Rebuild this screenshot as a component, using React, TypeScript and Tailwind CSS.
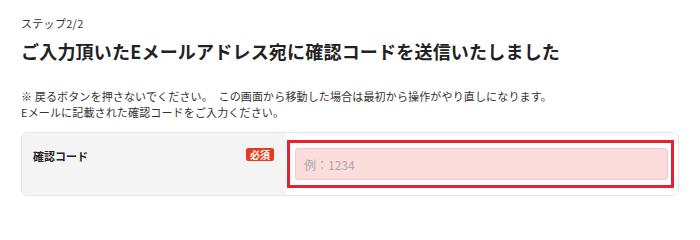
import React from 'react';

const App: React.FC = () => {
  return (
    <div
      className="w-[700px] h-[210px] bg-white px-[21px] pt-[15px] text-[#333]"
      style={{ fontFamily: '"Noto Sans CJK JP", "Noto Sans", sans-serif' }}
    >
      <p className="text-[11px] leading-[16px] tracking-[0.3px] text-[#333]">ステップ2/2</p>
      <h1 className="mt-[7px] text-[18px] leading-[26px] font-bold tracking-[0.2px] text-[#222]">
        ご入力頂いたEメールアドレス宛に確認コードを送信いたしました
      </h1>

      <div className="mt-[24px] text-[11px] leading-[16px] tracking-[0.15px] text-[#333]">
        <p>※ 戻るボタンを押さないでください。　この画面から移動した場合は最初から操作がやり直しになります。</p>
        <p>Eメールに記載された確認コードをご入力ください。</p>
      </div>

      <div className="mt-[12px] flex h-[64px] w-[658px] overflow-hidden rounded-[6px] border border-[#e6e6e6]">
        <div className="flex w-[264px] items-start justify-between bg-[#f4f4f4] pl-[11px] pr-[12px] pt-[15px]">
          <span className="text-[11px] leading-[16px] font-bold text-[#222]">確認コード</span>
          <span className="rounded-[2px] bg-[#e43d1c] px-[4px] text-[10px] leading-[13px] font-bold text-white">
            必須
          </span>
        </div>
        <div className="flex-1 bg-white pl-[1px] pr-[4px] pt-[7px] pb-[7px]">
          <div className="h-[48px] border-[3px] border-[#e8202f] pl-[5px] pr-[3px] pt-[5px] pb-[5px]">
            <input
              type="text"
              placeholder="例：1234"
              className="h-[32px] w-full rounded-[3px] border border-[#e8cccc] bg-[#fddcdc] px-[8px] text-[12px] text-[#333] placeholder:text-[#aaa] outline-none"
            />
          </div>
        </div>
      </div>
    </div>
  );
};

export default App;
